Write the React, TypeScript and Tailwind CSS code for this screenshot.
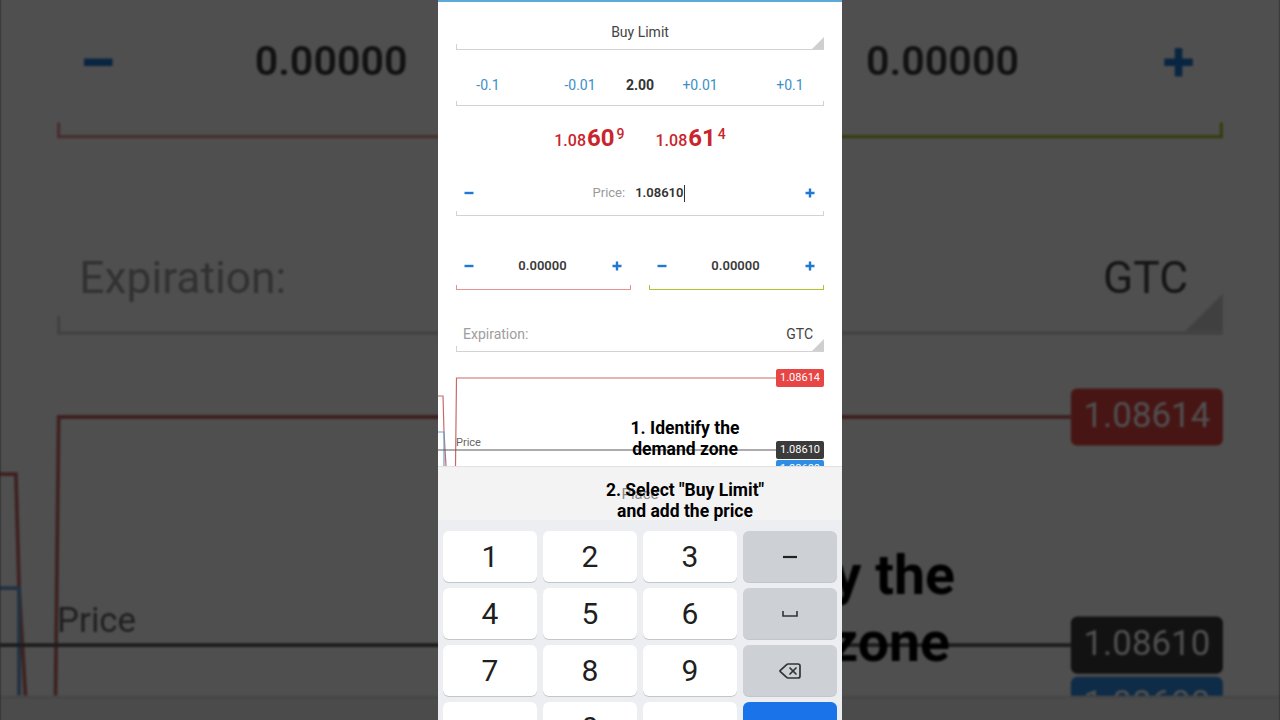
import React from 'react'
import { Delete } from 'lucide-react'

const BLUE = '#1f78d1'

function MinusIcon() {
  return (
    <svg width="10" height="10" viewBox="0 0 10 10">
      <path d="M0.5 5h9" stroke={BLUE} strokeWidth="2.4" />
    </svg>
  )
}

function PlusIcon() {
  return (
    <svg width="10" height="10" viewBox="0 0 10 10">
      <path d="M0.5 5h9M5 0.5v9" stroke={BLUE} strokeWidth="2.4" />
    </svg>
  )
}

// holo style underline with a tick at each end
function TickLine({ color = 'border-[#d2d2d2]' }: { color?: string }) {
  return <div className={`h-[5px] border-x border-b ${color}`} />
}

// spinner underline: left tick + corner triangle
function SpinnerLine() {
  return (
    <div className="relative h-[6px] border-l border-b border-[#d2d2d2]">
      <svg className="absolute right-0 bottom-0" width="12" height="12" viewBox="0 0 12 12">
        <polygon points="0,12 12,12 12,0" fill="#cfcfcf" />
      </svg>
    </div>
  )
}

function Quote({ base, big, sup }: { base: string; big: string; sup: string }) {
  return (
    <div className="flex items-baseline text-[#c9252c]">
      <span className="text-[16px] font-medium">{base}</span>
      <span className="text-[24px] font-bold leading-none ml-[1px]">{big}</span>
      <span className="text-[14px] font-medium self-start mt-[-2px] ml-[2px]">{sup}</span>
    </div>
  )
}

function Stepper({ value, line }: { value: string; line: string }) {
  return (
    <div className="w-[175px]">
      <div className="mt-[40px] h-[20px] flex items-center">
        <div className="w-[26px] flex justify-center"><MinusIcon /></div>
        <div className="flex-1 text-center text-[13px] font-semibold text-[#3a3a3a]">{value}</div>
        <div className="w-[28px] flex justify-center"><PlusIcon /></div>
      </div>
      <div className="mt-[9px]">
        <TickLine color={line} />
      </div>
    </div>
  )
}

function Chart() {
  return (
    <div className="relative h-[114px] overflow-hidden">
      <svg className="absolute inset-0" width="404" height="114" viewBox="0 0 404 114">
        <polyline points="0,44 5,44 6,80 8,114" fill="none" stroke="#c96a6a" strokeWidth="1.2" />
        <polyline points="0,80 6,80 6,114" fill="none" stroke="#6a9fcf" strokeWidth="1.2" />
        <polyline points="17.5,114 18.5,26 338,26" fill="none" stroke="#c96a6a" strokeWidth="1.2" />
        <line x1="0" y1="98" x2="338" y2="98" stroke="#5a5a5a" strokeWidth="1.2" />
      </svg>
      <span className="absolute left-[18px] top-[84px] text-[11px] leading-[14px] text-[#666]">Price</span>
      <div className="absolute left-[338px] top-[17px] w-[48px] h-[18px] rounded-[2px] bg-[#e84545] text-white text-[11px] leading-[18px] text-center">
        1.08614
      </div>
      <div className="absolute left-[338px] top-[89px] w-[48px] h-[18px] rounded-[2px] bg-[#3b3b3b] text-white text-[11px] leading-[18px] text-center">
        1.08610
      </div>
      <div className="absolute left-[338px] top-[108px] w-[48px] h-[18px] rounded-[2px] bg-[#2f8de4] text-white text-[11px] leading-[18px] text-center">
        1.08600
      </div>
    </div>
  )
}

function Key({ children, kind = 'digit' }: { children?: React.ReactNode; kind?: 'digit' | 'fn' | 'action' }) {
  const bg = kind === 'digit' ? 'bg-white' : kind === 'fn' ? 'bg-[#cdd1d6]' : 'bg-[#1a73e8]'
  return (
    <div className={`h-[51px] rounded-[6px] ${bg} shadow-[0_1px_0_#c2c5ca] flex items-center justify-center text-[30px] leading-none text-[#1f1f1f]`}>
      {children}
    </div>
  )
}

function Keyboard() {
  return (
    <div className="h-[200px] bg-[#eceef1] px-[5px] pt-[11px] grid grid-cols-4 auto-rows-[51px] gap-[6px]">
      <Key>1</Key>
      <Key>2</Key>
      <Key>3</Key>
      <Key kind="fn">
        <svg width="14" height="4" viewBox="0 0 14 4">
          <path d="M0 2h14" stroke="#222" strokeWidth="2.2" />
        </svg>
      </Key>
      <Key>4</Key>
      <Key>5</Key>
      <Key>6</Key>
      <Key kind="fn">
        <svg width="16" height="6" viewBox="0 0 16 6">
          <path d="M1 0v5h14v-5" fill="none" stroke="#333" strokeWidth="1.6" />
        </svg>
      </Key>
      <Key>7</Key>
      <Key>8</Key>
      <Key>9</Key>
      <Key kind="fn">
        <Delete size={24} strokeWidth={1.7} color="#333" />
      </Key>
      <Key />
      <Key>0</Key>
      <Key />
      <Key kind="action" />
    </div>
  )
}

function PhoneScreen() {
  return (
    <div className="relative w-[404px] h-[720px] bg-white font-['Roboto','Liberation_Sans',sans-serif] overflow-hidden">
      <div className="h-[2px] bg-[#5aa9d6]" />

      {/* order type */}
      <div className="mx-[18px]">
        <div className="mt-[20px] h-[20px] leading-[20px] text-center text-[14px] text-[#444]">Buy Limit</div>
        <div className="mt-[2px]"><SpinnerLine /></div>
      </div>

      {/* volume */}
      <div className="mx-[18px]">
        <div className="mt-[25px] h-[20px] grid grid-cols-[64px_24px_72px_48px_72px_20px_68px] items-center text-[14px] text-[#3b8fc6]">
          <span className="text-center">-0.1</span>
          <span />
          <span className="text-center">-0.01</span>
          <span className="text-center font-bold text-[#333]">2.00</span>
          <span className="text-center">+0.01</span>
          <span />
          <span className="text-center">+0.1</span>
        </div>
        <div className="mt-[6px]"><TickLine /></div>
      </div>

      {/* bid / ask */}
      <div className="h-[64px] pt-[3px] flex items-center justify-center gap-[31px]">
        <Quote base="1.08" big="60" sup="9" />
        <Quote base="1.08" big="61" sup="4" />
      </div>

      {/* price */}
      <div className="mx-[18px]">
        <div className="mt-[13px] h-[20px] flex items-center">
          <div className="w-[26px] flex justify-center"><MinusIcon /></div>
          <div className="flex-1 flex items-center justify-center text-[13px]">
            <span className="text-[#9a9a9a]">Price:</span>
            <span className="ml-[10px] font-semibold text-[#333]">1.08610</span>
            <span className="ml-[1px] w-px h-[17px] bg-[#333]" />
          </div>
          <div className="w-[28px] flex justify-center"><PlusIcon /></div>
        </div>
        <div className="mt-[8px]"><TickLine /></div>
      </div>

      {/* stop loss / take profit */}
      <div className="mx-[18px] flex justify-between">
        <Stepper value="0.00000" line="border-[#e79292]" />
        <Stepper value="0.00000" line="border-[#a9c62e]" />
      </div>

      {/* expiration */}
      <div className="mx-[18px]">
        <div className="mt-[34px] h-[20px] flex items-center justify-between pl-[7px] pr-[11px] text-[14px]">
          <span className="text-[#9e9e9e]">Expiration:</span>
          <span className="text-[#444]">GTC</span>
        </div>
        <div className="mt-[2px]"><SpinnerLine /></div>
      </div>

      <Chart />

      <div className="h-[54px] bg-[#f3f3f3] border-t border-[#e2e2e2] flex items-center justify-center">
        <span className="text-[15px] text-[#8a8a8a] mt-[2px]">Place</span>
      </div>

      <Keyboard />

      {/* video captions */}
      <div className="absolute left-[137px] top-[418px] w-[220px] text-center text-[17.5px] leading-[21px] font-bold text-black">
        1. Identify the<br />demand zone
      </div>
      <div className="absolute left-[117px] top-[480px] w-[260px] text-center text-[17.5px] leading-[21px] font-bold text-black">
        2. Select "Buy Limit"<br />and add the price
      </div>
    </div>
  )
}

export default function App() {
  return (
    <div className="relative w-[1280px] h-[720px] overflow-hidden bg-[#4f4f4f]">
      <div aria-hidden className="absolute inset-0 flex justify-center blur-[1px]">
        <div className="scale-[3.168] origin-center">
          <PhoneScreen />
        </div>
      </div>
      <div className="absolute inset-0 bg-black/[0.69]" />
      <div className="relative flex justify-center">
        <PhoneScreen />
      </div>
    </div>
  )
}
